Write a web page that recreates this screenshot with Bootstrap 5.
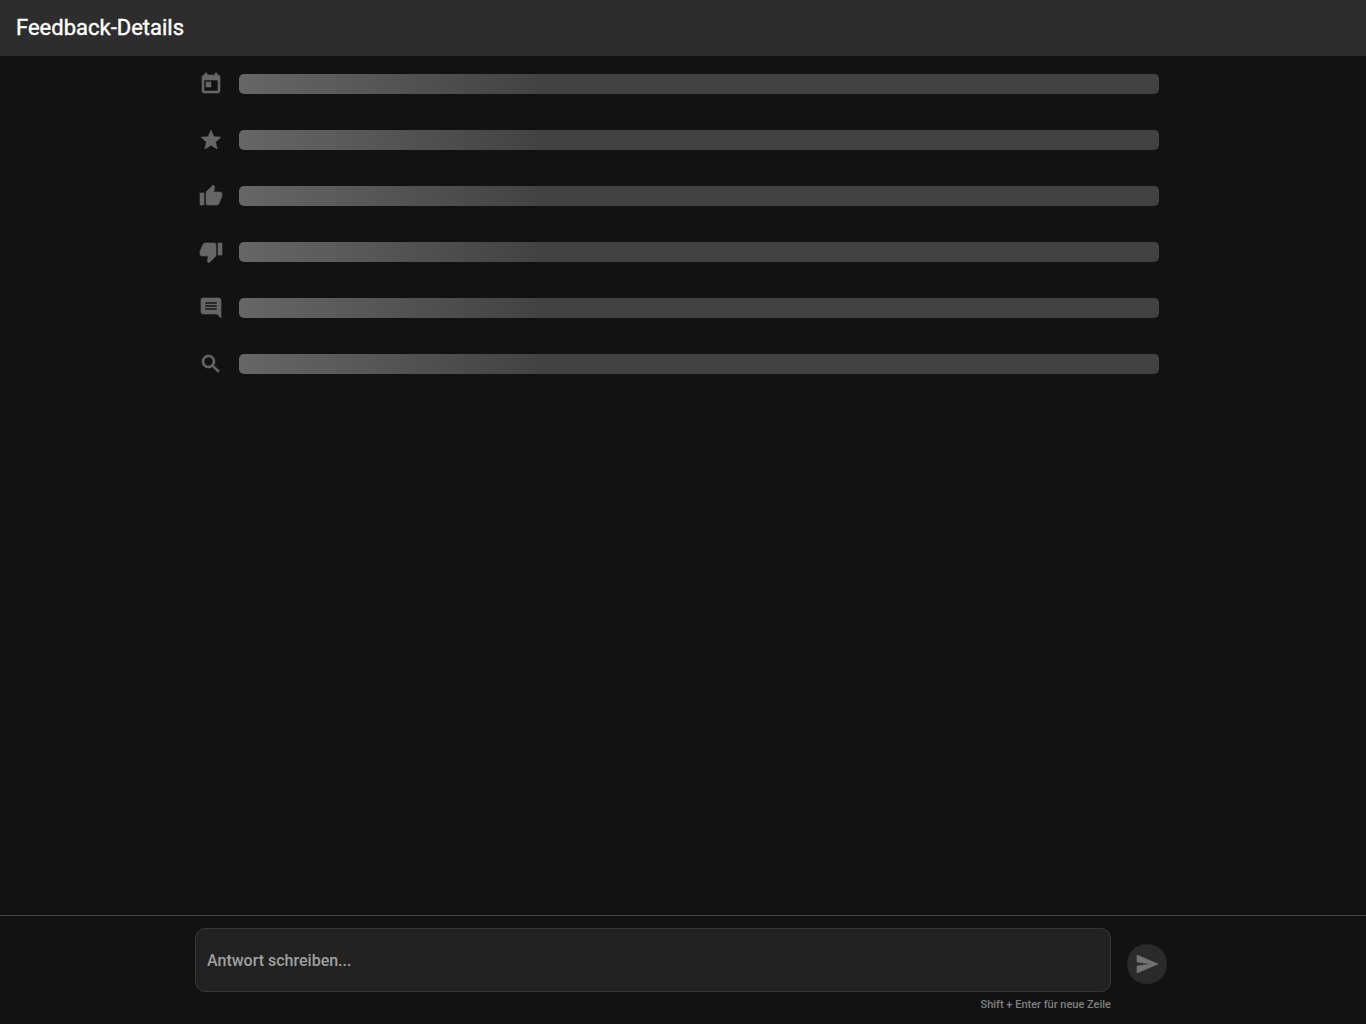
<!DOCTYPE html>
<html lang="de">
<head>
<meta charset="utf-8">
<meta name="viewport" content="width=device-width, initial-scale=1">
<title>Feedback-Details</title>
<link rel="stylesheet" href="https://cdn.jsdelivr.net/npm/bootstrap@5.3.0/dist/css/bootstrap.min.css">
<style>
body { background: #121212; color: #fff; font-family: Roboto, "Liberation Sans", sans-serif; }
.app-bar { background: #2d2d2d; height: 56px; }
.app-title { font-size: 22px; line-height: 28px; font-weight: 400; -webkit-text-stroke: 0.4px #fff; }
.detail-list { max-width: 976px; padding: 0 12px 0 4px; }
.detail-row { height: 56px; gap: 16px; }
.detail-row svg { width: 24px; height: 24px; fill: #666; stroke: #666; stroke-width: 0.6; flex: none; overflow: visible; }
.skeleton { height: 20px; border-radius: 5px; background: linear-gradient(90deg, #666 0, #424242 33%, #424242 100%); }
.reply-bar { border-top: 1px solid #47484b; padding: 12px 16px 10px; }
.reply-inner { max-width: 976px; padding-right: 4px; gap: 16px; }
.reply-input, .reply-input:focus { height: 64px; resize: none; padding: 20px 11px 18px; font-size: 16px; line-height: 24px; font-weight: 500; color: #fff; background: #222; border: 1px solid #373737; border-radius: 10px; box-shadow: none; }
.reply-input::placeholder { color: #a0a0a0; opacity: 1; }
.reply-hint { font-size: 11px; line-height: 18px; font-weight: 500; margin-top: 4px; color: #808080; }
.send-btn { width: 40px; height: 40px; margin-top: 16px; background: #2a2a2a; flex: none; }
.send-btn svg { width: 24px; height: 24px; fill: #737373; stroke: #737373; stroke-width: 0.6; }
</style>
<script src="https://cdn.jsdelivr.net/npm/bootstrap@5.3.0/dist/js/bootstrap.bundle.min.js"></script>
</head>
<body class="min-vh-100 d-flex flex-column">
<header class="app-bar d-flex align-items-center px-3">
  <h1 class="app-title mb-0">Feedback-Details</h1>
</header>
<main class="flex-grow-1" aria-busy="true">
  <div class="detail-list mx-auto">
    <div class="detail-row d-flex align-items-center">
      <svg viewBox="0 0 24 24" aria-hidden="true"><path d="M19 3h-1V1h-2v2H8V1H6v2H5c-1.11 0-1.99.9-1.99 2L3 19c0 1.1.89 2 2 2h14c1.1 0 2-.9 2-2V5c0-1.1-.9-2-2-2zm0 16H5V8h14v11zM7 10h5v5H7z"/></svg>
      <div class="skeleton flex-grow-1"></div>
    </div>
    <div class="detail-row d-flex align-items-center">
      <svg viewBox="0 0 24 24" aria-hidden="true"><path d="M12 17.27 18.18 21l-1.64-7.03L22 9.24l-7.19-.61L12 2 9.19 8.63 2 9.24l5.46 4.73L5.82 21z"/></svg>
      <div class="skeleton flex-grow-1"></div>
    </div>
    <div class="detail-row d-flex align-items-center">
      <svg viewBox="0 0 24 24" aria-hidden="true"><path d="M1 21h4V9H1v12zm22-11c0-1.1-.9-2-2-2h-6.31l.95-4.57.03-.32c0-.41-.17-.79-.44-1.06L14.17 1 7.59 7.59C7.22 7.95 7 8.45 7 9v10c0 1.1.9 2 2 2h9c.83 0 1.54-.5 1.84-1.22l3.02-7.05c.09-.23.14-.47.14-.73v-2z"/></svg>
      <div class="skeleton flex-grow-1"></div>
    </div>
    <div class="detail-row d-flex align-items-center">
      <svg viewBox="0 0 24 24" aria-hidden="true"><path d="M15 3H6c-.83 0-1.54.5-1.84 1.22l-3.02 7.05c-.09.23-.14.47-.14.73v2c0 1.1.9 2 2 2h6.31l-.95 4.57-.03.32c0 .41.17.79.44 1.06L9.83 23l6.59-6.59c.36-.36.58-.86.58-1.41V5c0-1.1-.9-2-2-2zm4 0v12h4V3h-4z"/></svg>
      <div class="skeleton flex-grow-1"></div>
    </div>
    <div class="detail-row d-flex align-items-center">
      <svg viewBox="0 0 24 24" aria-hidden="true"><path d="M21.99 4c0-1.1-.89-2-1.99-2H4c-1.1 0-2 .9-2 2v12c0 1.1.9 2 2 2h14l4 4-.01-18zM18 14H6v-2h12v2zm0-3H6V9h12v2zm0-3H6V6h12v2z"/></svg>
      <div class="skeleton flex-grow-1"></div>
    </div>
    <div class="detail-row d-flex align-items-center">
      <svg viewBox="0 0 24 24" aria-hidden="true"><path d="M15.5 14h-.79l-.28-.27C15.41 12.59 16 11.11 16 9.5 16 5.91 13.09 3 9.5 3S3 5.91 3 9.5 5.91 16 9.5 16c1.61 0 3.09-.59 4.23-1.57l.27.28v.79l5 4.99L20.49 19l-4.99-5zm-6 0C7.01 14 5 11.99 5 9.5S7.01 5 9.5 5 14 7.01 14 9.5 11.99 14 9.5 14z"/></svg>
      <div class="skeleton flex-grow-1"></div>
    </div>
  </div>
</main>
<footer class="reply-bar">
  <form class="reply-inner mx-auto d-flex align-items-start">
    <div class="flex-grow-1">
      <textarea class="form-control reply-input d-block" rows="1" placeholder="Antwort schreiben..." aria-label="Antwort schreiben" aria-describedby="hint"></textarea>
      <div class="reply-hint text-end" id="hint">Shift + Enter für neue Zeile</div>
    </div>
    <button type="button" class="send-btn btn border-0 rounded-circle p-0 d-flex align-items-center justify-content-center" aria-label="Senden">
      <svg viewBox="0 0 24 24" aria-hidden="true"><path d="M2.01 21 23 12 2.01 3 2 10l15 2-15 2z"/></svg>
    </button>
  </form>
</footer>
</body>
</html>
